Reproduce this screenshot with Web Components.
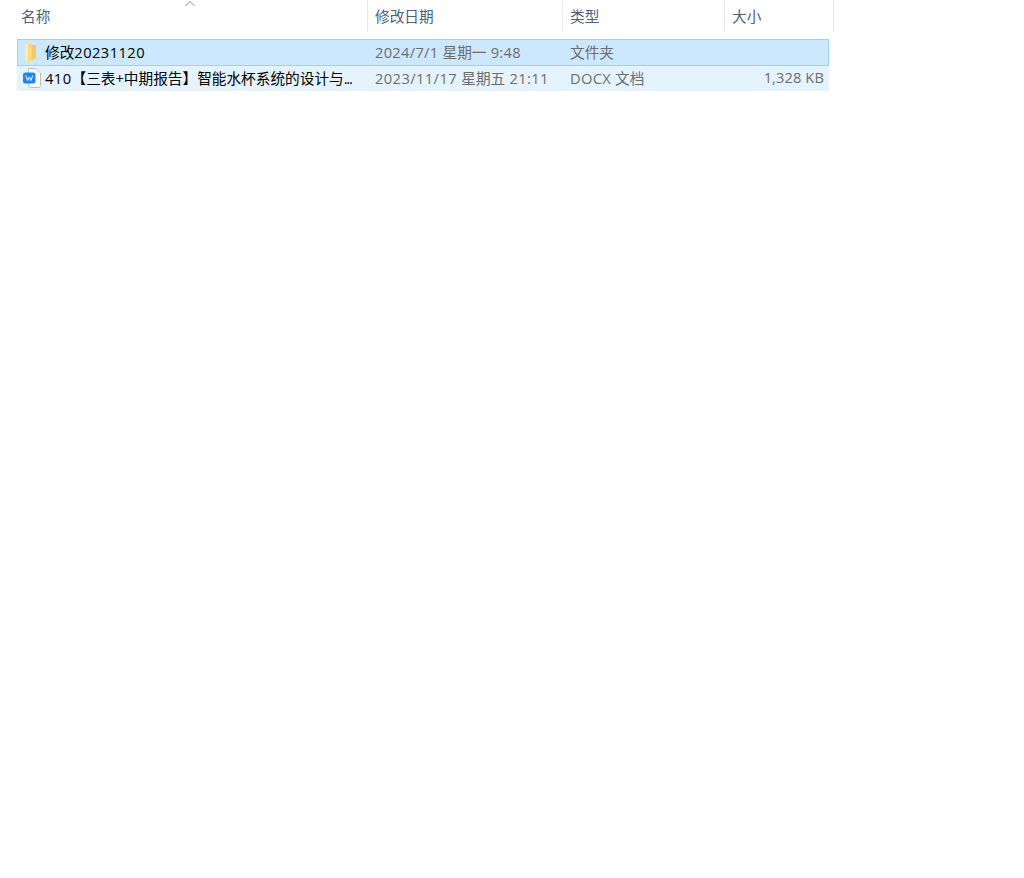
<!DOCTYPE html>
<html lang="zh">
<head>
<meta charset="utf-8">
<title>文件列表</title>
<style>
  html, body { margin: 0; padding: 0; background: #fff; }
  body { font-family: "Open Sans", "Noto Sans CJK SC", sans-serif; }
</style>
</head>
<body>
<file-list>
  <list-header>
    <header-cell style="--w:368px" sorted>名称</header-cell>
    <header-cell style="--w:195px">修改日期</header-cell>
    <header-cell style="--w:162px">类型</header-cell>
    <header-cell style="--w:109px">大小</header-cell>
  </list-header>
  <file-row selected name="修改20231120" date="2024/7/1 星期一 9:48" type="文件夹" icon="folder"></file-row>
  <file-row name="410【三表+中期报告】智能水杯系统的设计与..." date="2023/11/17 星期五 21:11" type="DOCX 文档" size="1,328 KB" icon="docx"></file-row>
</file-list>

<script>
  class FileList extends HTMLElement {
    constructor() {
      super();
      this.attachShadow({ mode: 'open' });
      this.shadowRoot.innerHTML = `
        <style>
          :host { display: block; }
          .rows { display: flex; flex-direction: column; padding: 7px 0 0 17px; width: 812px; }
        </style>
        <slot name="header"></slot>
        <div class="rows"><slot></slot></div>
      `;
    }
  }

  class ListHeader extends HTMLElement {
    constructor() {
      super();
      this.attachShadow({ mode: 'open' });
      this.shadowRoot.innerHTML = `
        <style>
          :host { display: flex; height: 32px; }
        </style>
        <slot></slot>
      `;
    }
    connectedCallback() {
      this.setAttribute('slot', 'header');
    }
  }

  class HeaderCell extends HTMLElement {
    constructor() {
      super();
      this.attachShadow({ mode: 'open' });
      this.shadowRoot.innerHTML = `
        <style>
          :host {
            display: flex;
            align-items: center;
            position: relative;
            box-sizing: border-box;
            width: var(--w);
            height: 32px;
            padding: 0 0 2px 7px;
            border-right: 1px solid #e8e8e8;
            color: #4c607a;
            font: 14.67px "Open Sans", "Noto Sans CJK SC", sans-serif;
          }
          :host(:first-child) { padding-left: 21px; }
          svg { display: none; position: absolute; left: 184px; top: 0; }
          :host([sorted]) svg { display: block; }
        </style>
        <svg width="12" height="7" viewBox="0 0 12 7" fill="none" stroke="#8a8a8a" stroke-width="1">
          <path d="M1.5 6 L6 1.5 L10.5 6"/>
        </svg>
        <slot></slot>
      `;
    }
  }

  const ICONS = {
    folder: `<svg width="12" height="17" viewBox="0 0 12 17">
        <path d="M0 0 H6 L7 1 H11 V14 L6 17 H0 Z" fill="#f9d87f"/>
        <path d="M0 0 H3 V17 H0 Z" fill="#fdebb0"/>
        <path d="M7 1 H11 V14 L7 16 Z" fill="#f6c95e"/>
      </svg>`,
    docx: `<svg width="18" height="20" viewBox="0 0 18 20">
        <path d="M5.5 .5 H12.5 L17.5 5 V17.5 Q17.5 19.5 15.5 19.5 H7.5 Q5.5 19.5 5.5 17.5 Z" fill="#fff" stroke="#b4bfcc"/>
        <rect x="0" y="4.5" width="12.5" height="11" rx="2.5" fill="#1b87f5"/>
        <path d="M2.8 7.5 L4.6 12.5 L6.25 9 L7.9 12.5 L9.7 7.5" fill="none" stroke="#fff" stroke-width="1"/>
      </svg>`
  };

  // latin runs are a bit wider in the reference than the installed font gives
  const spaced = (text) => text
    .replace(/[0-9A-Za-z\/:, ]+/g, (run) => `<span class="lat">${run}</span>`)
    .replace('...', '<span class="dots">...</span>');

  class FileRow extends HTMLElement {
    constructor() {
      super();
      this.attachShadow({ mode: 'open' });
    }

    connectedCallback() {
      this.render();
    }

    render() {
      const attr = (name) => this.getAttribute(name) || '';
      this.shadowRoot.innerHTML = `
        <style>
          :host {
            display: grid;
            grid-template-columns: 350px 195px 162px 105px;
            box-sizing: border-box;
            height: 25px;
            padding-bottom: 3px;
            align-items: center;
            background: #e5f3ff;
            color: #6d6d6d;
            font: 14.67px "Open Sans", "Noto Sans CJK SC", sans-serif;
          }
          :host([selected]) {
            height: 27px;
            background: #cce8ff;
            box-shadow: inset 0 0 0 1px #99d1ff;
          }
          .name { display: flex; align-items: center; color: #000; white-space: pre; }
          .icon { width: 22px; padding-left: 6px; display: flex; flex: none; transform: translateY(1px); }
          :host([selected]) .icon { padding-left: 8px; width: 20px; }
          .date, .type { padding-left: 8px; white-space: pre; }
          .size { text-align: right; padding-right: 5px; }
          .lat { letter-spacing: .3px; }
          :host(:not([selected])) .date .lat { letter-spacing: .42px; }
          .name .lat { letter-spacing: .45px; }
          .size .lat { letter-spacing: .1px; }
          .dots { letter-spacing: -1.2px; }
        </style>
        <div class="name"><span class="icon">${ICONS[attr('icon')]}</span><span>${spaced(attr('name'))}</span></div>
        <div class="date">${spaced(attr('date'))}</div>
        <div class="type">${spaced(attr('type'))}</div>
        <div class="size">${spaced(attr('size'))}</div>
      `;
    }
  }

  customElements.define('file-list', FileList);
  customElements.define('list-header', ListHeader);
  customElements.define('header-cell', HeaderCell);
  customElements.define('file-row', FileRow);
</script>
</body>
</html>
